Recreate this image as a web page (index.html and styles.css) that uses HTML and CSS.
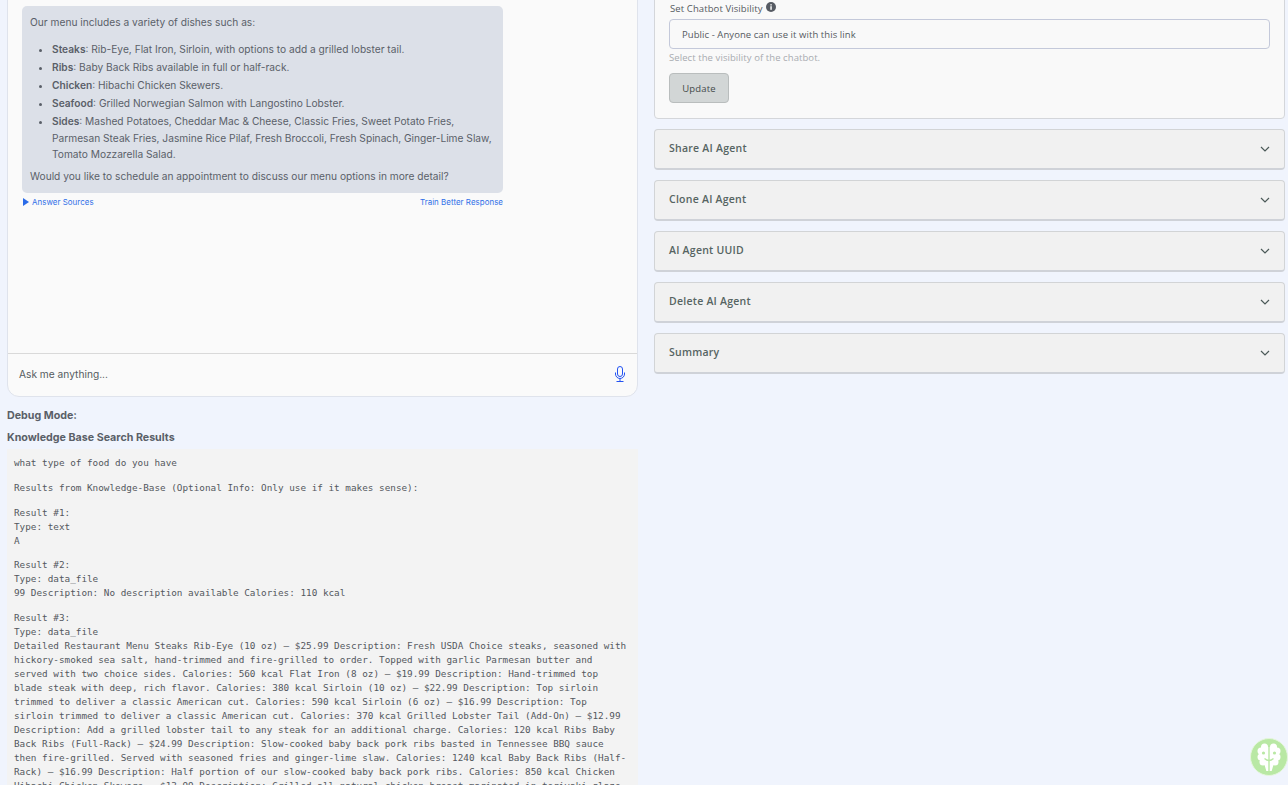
FILE: index.html
```html
<!DOCTYPE html>
<html lang="en">
<head>
<meta charset="utf-8">
<title>AI Agent</title>
<link rel="stylesheet" href="styles.css">
</head>
<body>
<main class="page">
  <section class="left">
    <div class="chat">
      <div class="messages">
        <div class="bubble">
          <p class="intro">Our menu includes a variety of dishes such as:</p>
          <ul class="menu">
            <li><b>Steaks</b>: Rib-Eye, Flat Iron, Sirloin, with options to add a grilled lobster tail.</li>
            <li><b>Ribs</b>: Baby Back Ribs available in full or half-rack.</li>
            <li><b>Chicken</b>: Hibachi Chicken Skewers.</li>
            <li><b>Seafood</b>: Grilled Norwegian Salmon with Langostino Lobster.</li>
            <li><b>Sides</b>: Mashed Potatoes, Cheddar Mac &amp; Cheese, Classic Fries, Sweet Potato Fries, Parmesan Steak Fries, Jasmine Rice Pilaf, Fresh Broccoli, Fresh Spinach, Ginger-Lime Slaw, Tomato Mozzarella Salad.</li>
          </ul>
          <p class="outro">Would you like to schedule an appointment to discuss our menu options in more detail?</p>
        </div>
        <div class="links">
          <a class="link"><span class="tri"></span>Answer Sources</a>
          <a class="link">Train Better Response</a>
        </div>
      </div>
      <div class="ask">
        <span>Ask me anything...</span>
        <svg class="mic" viewBox="0 0 12 16" width="12" height="16" fill="none" stroke="currentColor" stroke-width="1">
          <rect x="3.5" y="0.5" width="5" height="10" rx="2.5"/>
          <path d="M1.5 6.5v1.5a4.5 4.5 0 0 0 9 0V6.5M6 12.5v2.5M2.5 15.5h7"/>
        </svg>
      </div>
    </div>
    <h4 class="debug">Debug Mode:</h4>
    <h4 class="kb">Knowledge Base Search Results</h4>
    <div class="results">
      <p>what type of food do you have</p>
      <p>Results from Knowledge-Base (Optional Info: Only use if it makes sense):</p>
      <p>Result #1:<br>Type: text<br>A</p>
      <p>Result #2:<br>Type: data_file<br>99 Description: No description available Calories: 110 kcal</p>
      <p>Result #3:<br>Type: data_file<br>Detailed Restaurant Menu Steaks Rib-Eye (10 oz) – $25.99 Description: Fresh USDA Choice steaks, seasoned with hickory-smoked sea salt, hand-trimmed and fire-grilled to order. Topped with garlic Parmesan butter and served with two choice sides. Calories: 560 kcal Flat Iron (8 oz) – $19.99 Description: Hand-trimmed top blade steak with deep, rich flavor. Calories: 380 kcal Sirloin (10 oz) – $22.99 Description: Top sirloin trimmed to deliver a classic American cut. Calories: 590 kcal Sirloin (6 oz) – $16.99 Description: Top sirloin trimmed to deliver a classic American cut. Calories: 370 kcal Grilled Lobster Tail (Add-On) – $12.99 Description: Add a grilled lobster tail to any steak for an additional charge. Calories: 120 kcal Ribs Baby Back Ribs (Full-Rack) – $24.99 Description: Slow-cooked baby back pork ribs basted in Tennessee BBQ sauce then fire-grilled. Served with seasoned fries and ginger-lime slaw. Calories: 1240 kcal Baby Back Ribs (Half-Rack) – $16.99 Description: Half portion of our slow-cooked baby back pork ribs. Calories: 850 kcal Chicken Hibachi Chicken Skewers – $13.99 Description: Grilled all-natural chicken breast marinated in teriyaki glaze.</p>
    </div>
  </section>

  <aside class="right">
    <div class="settings">
      <label class="label">Set Chatbot Visibility
        <svg class="info" viewBox="0 0 10 10" width="10" height="10">
          <circle cx="5" cy="5" r="5" fill="#565b63"/>
          <rect x="4.3" y="4.2" width="1.5" height="3.6" fill="#f9f9f9"/>
          <rect x="4.3" y="2.2" width="1.5" height="1.3" fill="#f9f9f9"/>
        </svg>
      </label>
      <div class="select">Public - Anyone can use it with this link</div>
      <div class="help">Select the visibility of the chatbot.</div>
      <button class="update">Update</button>
    </div>
    <div class="acc"><span>Share AI Agent</span><svg class="chev" viewBox="0 0 10 6" width="10" height="6"><path d="M1 1l4 4 4-4" fill="none" stroke="currentColor" stroke-width="1.2"/></svg></div>
    <div class="acc"><span>Clone AI Agent</span><svg class="chev" viewBox="0 0 10 6" width="10" height="6"><path d="M1 1l4 4 4-4" fill="none" stroke="currentColor" stroke-width="1.2"/></svg></div>
    <div class="acc"><span>AI Agent UUID</span><svg class="chev" viewBox="0 0 10 6" width="10" height="6"><path d="M1 1l4 4 4-4" fill="none" stroke="currentColor" stroke-width="1.2"/></svg></div>
    <div class="acc"><span>Delete AI Agent</span><svg class="chev" viewBox="0 0 10 6" width="10" height="6"><path d="M1 1l4 4 4-4" fill="none" stroke="currentColor" stroke-width="1.2"/></svg></div>
    <div class="acc"><span>Summary</span><svg class="chev" viewBox="0 0 10 6" width="10" height="6"><path d="M1 1l4 4 4-4" fill="none" stroke="currentColor" stroke-width="1.2"/></svg></div>
  </aside>
</main>
<svg class="brain" viewBox="0 0 38 38" width="38" height="38">
  <circle cx="19" cy="19" r="18.5" fill="#b9e8a4" stroke="#e4f5dc" stroke-width="1"/>
  <g fill="#fff">
    <circle cx="14.5" cy="9" r="3.5"/><circle cx="23.5" cy="9" r="3.5"/>
    <circle cx="11" cy="13" r="3.5"/><circle cx="27" cy="13" r="3.5"/>
    <circle cx="11" cy="19" r="3.5"/><circle cx="27" cy="19" r="3.5"/>
    <circle cx="13" cy="24" r="3.5"/><circle cx="25" cy="24" r="3.5"/>
    <rect x="11" y="9" width="7.3" height="16"/><rect x="19.7" y="9" width="7.3" height="16"/>
    <path d="M14 25h4.3v8h-2zM24 25h-4.3v8h2z"/>
  </g>
  <circle cx="13.5" cy="15" r="1.6" fill="#b9e8a4"/>
  <circle cx="24.5" cy="15" r="1.6" fill="#b9e8a4"/>
  <path d="M14.5 20.5q4.5 4 9 0" fill="none" stroke="#b9e8a4" stroke-width="1.3"/>
</svg>
</body>
</html>
```
FILE: styles.css
```css
* { box-sizing: border-box; }
html, body { margin: 0; height: 785px; overflow: hidden; }
body { background: #f0f4fd; font-family: Inter, "Liberation Sans", sans-serif; color: #5a5f68; }

.page {
  display: grid;
  grid-template-columns: 631px 631px;
  column-gap: 16px;
  align-items: start;
  margin: -20px 0 0 7px;
}

/* Left column */
.chat {
  height: 417px;
  background: #fafafa;
  border: 1px solid #dfe3ec;
  border-radius: 0 0 12px 12px;
  display: flex;
  flex-direction: column;
}
.messages { flex: 1; padding: 25px 14px 0; }
.bubble {
  width: 481px;
  background: #dce0e8;
  border-radius: 5px;
  padding: 8px 8px 9px;
  font-size: 10.2px;
  line-height: 16.4px;
}
.bubble p { margin: 0; }
.bubble .intro { margin-bottom: 11px; }
.menu { margin: 0 0 5px; padding-left: 22px; }
.menu li { margin-bottom: 1.6px; }
.menu li::marker { font-size: 10px; }
.menu b { font-weight: 600; }
.links {
  width: 481px;
  display: flex;
  justify-content: space-between;
  margin-top: 4px;
  font-size: 7.9px;
  line-height: 10px;
  letter-spacing: .05px;
}
.link { color: #2f6fe8; display: flex; align-items: center; }
.tri {
  width: 0; height: 0;
  margin: 0 3px 0 1px;
  border-left: 6px solid #2a6be8;
  border-top: 4px solid transparent;
  border-bottom: 4px solid transparent;
}
.ask {
  height: 43px;
  border-top: 1px solid #d9d9d9;
  padding: 0 11px 3px;
  display: flex;
  align-items: center;
  justify-content: space-between;
  font-size: 10.2px;
  color: #555a60;
}
.mic { color: #2353f2; }
.debug, .kb { margin: 0; font-size: 10.7px; line-height: 14px; font-weight: 700; color: #5a5f68; }
.debug { margin-top: 12px; }
.kb { margin-top: 8px; }
.results {
  margin-top: 4px;
  height: 420px;
  overflow: hidden;
  background: #f3f3f3;
  padding: 7px 7px 0;
  font-family: "DejaVu Sans Mono", "Liberation Mono", monospace;
  font-size: 9.33px;
  line-height: 14px;
  color: #54585e;
}
.results p { margin: 0 0 10.75px; width: 615px; }

/* Right column */
.settings {
  height: 139px;
  background: #f9f9f9;
  border: 1px solid #d4d6da;
  border-radius: 0 0 4px 4px;
  padding: 20px 14px 0;
  font-family: "Open Sans", sans-serif;
}
.label { display: flex; align-items: center; gap: 3px; height: 14px; padding-left: 1px; font-size: 9.5px; color: #55595f; letter-spacing: .1px; }
.info { margin-bottom: 3px; }
.select {
  height: 30px;
  margin-top: 4px;
  padding: 0 12px;
  background: #f9f9f9;
  border: 1px solid #c4c9da;
  border-radius: 4px;
  display: flex;
  align-items: center;
  font-size: 9.5px;
  color: #55595f;
  letter-spacing: .07px;
}
.help { margin-top: 2px; font-size: 9.5px; line-height: 13px; color: #a8abb0; letter-spacing: .08px; }
.update {
  display: block;
  width: 60px;
  height: 30px;
  margin-top: 9px;
  padding: 0;
  background: #d2d6d6;
  border: 1px solid #b9bdbd;
  border-radius: 4px;
  font-family: "Open Sans", sans-serif;
  font-size: 9.5px;
  color: #444a4a;
  letter-spacing: .2px;
}
.acc {
  height: 41px;
  margin-top: 10px;
  padding: 0 14px 2px;
  background: #f1f1f1;
  border: 1px solid #d2d4d6;
  border-bottom: 2px solid #cfd2d8;
  border-radius: 4px;
  display: flex;
  align-items: center;
  justify-content: space-between;
  font-family: "Open Sans", sans-serif;
  font-size: 10.5px;
  font-weight: 600;
  letter-spacing: .25px;
  color: #566462;
}
.chev { color: #4c5a59; margin-top: 2px; }

/* Floating logo */
.brain { position: fixed; left: 1250px; top: 738px; }
```
